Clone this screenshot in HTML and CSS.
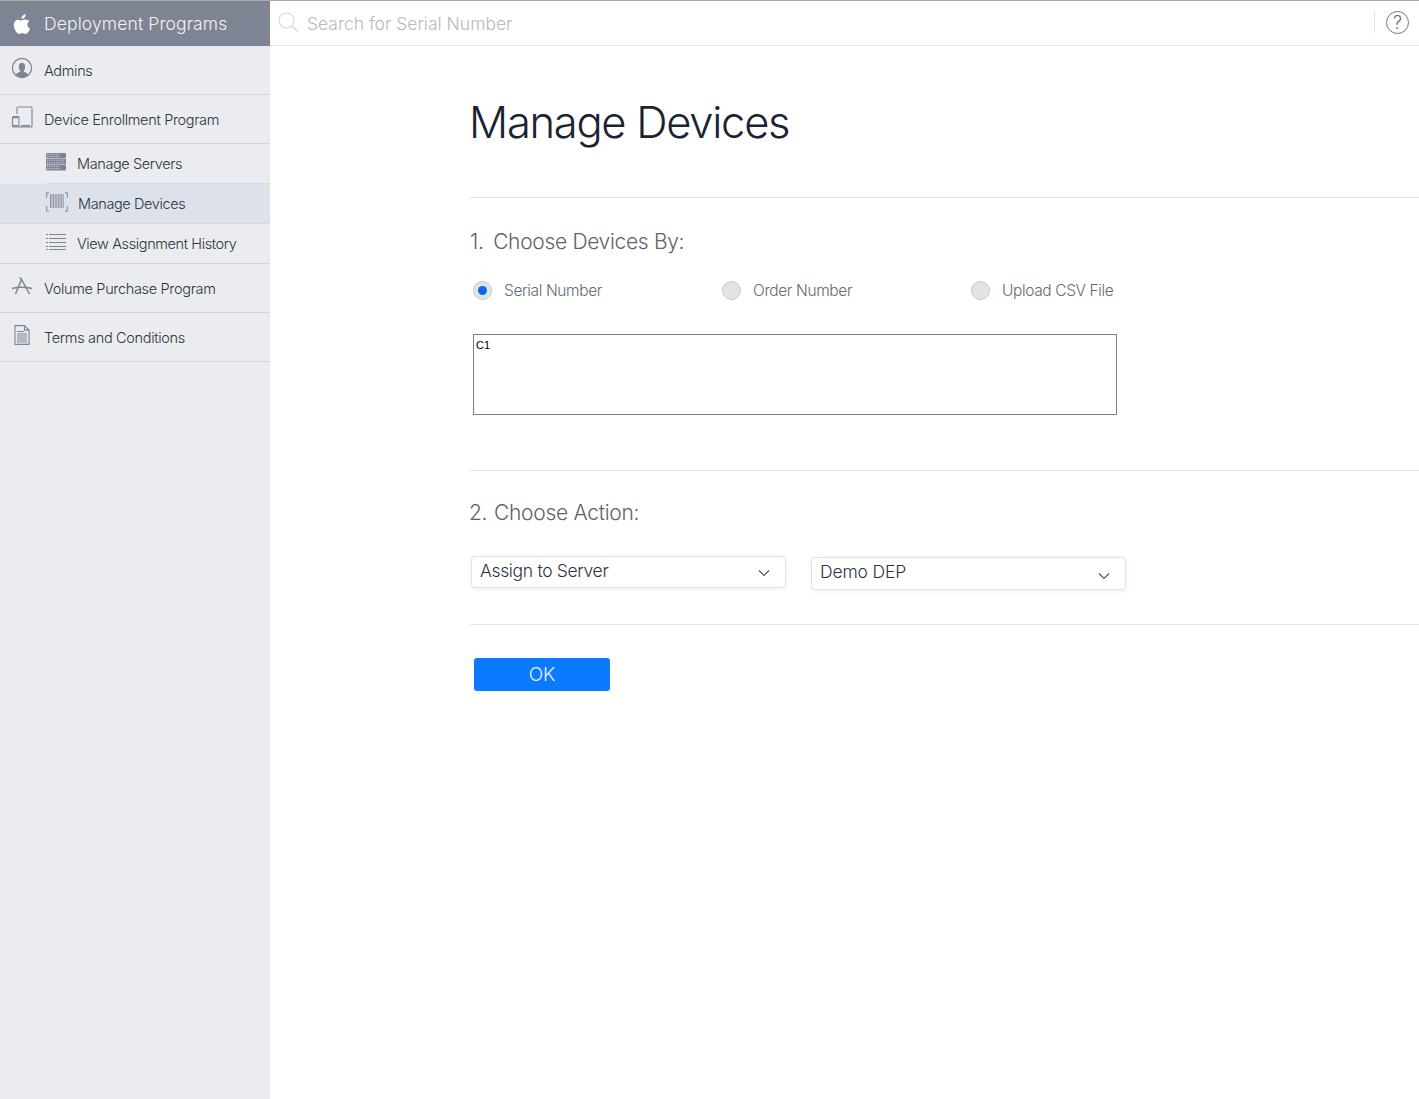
FILE: index.html
```html
<!DOCTYPE html>
<html lang="en">
<head>
<meta charset="utf-8">
<title>Manage Devices</title>
<link rel="stylesheet" href="styles.css">
</head>
<body>
<div class="app">
  <aside class="sidebar">
    <div class="brand">
      <svg class="brand-logo" width="20" height="24" viewBox="0 0 20 24"><path fill="#fff" d="M13.6 2.2c.1 1.3-.4 2.400-1.100 3.200-.8.900-1.900 1.500-3 1.400-.1-1.200.4-2.400 1.100-3.100.8-.9 2-1.500 3-1.500zM17.400 9.200c-1.300.9-2 2-2 3.500 0 1.800 1 3 2.700 3.800-.4 1.200-1 2.300-1.700 3.300-1 1.400-1.800 2.200-3 2.200-1.200 0-1.700-.7-3.200-.7-1.500 0-2 .7-3.200.7-1.100 0-2-.9-3-2.400C2.700 17.700 1.800 15.300 1.800 13c0-3.400 2.200-5.300 4.500-5.300 1.300 0 2.300.8 3.100.8.800 0 2-.9 3.500-.9 1.900 0 3.400.8 4.500 1.600z"/></svg>
      <span>Deployment Programs</span>
    </div>
    <nav>
      <a class="item">
        <svg class="ico" width="22" height="22" viewBox="0 0 22 22"><circle cx="11" cy="11" r="9.600" fill="#eaecf0" stroke="#7f8494" stroke-width="1.200"/><path fill="#7f8494" d="M4.800 18.200c1-2.700 3.900-2.600 4.500-4.100-2.300-2.900-2-8.300 1.700-8.300s4 5.400 1.700 8.300c.6 1.500 3.500 1.400 4.500 4.100-1.700 1.500-3.900 2.400-6.200 2.400s-4.500-.9-6.200-2.400z"/></svg>
        <span>Admins</span>
      </a>
      <a class="item">
        <svg class="ico" width="22" height="22" viewBox="0 0 22 22"><path fill="none" stroke="#7f8494" stroke-width="1.100" d="M6 8V2a1 1 0 0 1 1-1h13a1 1 0 0 1 1 1v18a1 1 0 0 1-1 1H8"/><rect x="1.500" y="10.500" width="6.500" height="10.500" rx="1" fill="#eaecf0" stroke="#7f8494" stroke-width="1.100"/><path stroke="#7f8494" stroke-width="1.600" d="M2 11.500h5.500M2 19.800h5.500M10 19.800h9"/></svg>
        <span>Device Enrollment Program</span>
      </a>
      <a class="sub">
        <svg class="sub-ico" width="20" height="18" viewBox="0 0 20 18"><g fill="#7f8494"><rect width="20" height="5.500" y="0" rx="1"/><rect width="20" height="5.500" y="6" rx="0"/><rect width="20" height="5.500" y="12" rx="1"/></g><path stroke="#eaecf0" stroke-width=".7" stroke-dasharray="1 .8" d="M1 1.400h13M1 3.600h13M1 7.300h18M1 9.800h18M1 13.400h13M1 15.600h13"/></svg>
        <span>Manage Servers</span>
      </a>
      <a class="sub sub-active">
        <svg class="sub-ico" width="22" height="20" viewBox="0 0 22 20"><path fill="none" stroke="#7f8494" d="M3 .7H.7v5M19 .7h2.300v5M.7 14v5.300H3M21.300 14v5.300H19"/><path stroke="#7f8494" stroke-width=".8" d="M4.500 2v14M6 2v14M7.600 2v14M9.200 2v14M10.800 2v14M12.400 2v14M14 2v14M15.600 2v14M17.200 2v14"/></svg>
        <span>Manage Devices</span>
      </a>
      <a class="sub sub-last">
        <svg class="sub-ico" width="20" height="18" viewBox="0 0 20 18"><path stroke="#7f8494" d="M3 1.500h17M3 5.500h17M3 9.500h17M3 13.500h17M3 16.500h17M0 1.500h2M0 5.500h2M0 9.500h2M0 13.500h2M0 16.500h2"/></svg>
        <span>View Assignment History</span>
      </a>
      <a class="item">
        <svg class="ico" width="22" height="20" viewBox="0 0 22 20"><path fill="none" stroke="#7f8494" stroke-width="1.500" d="M4.500 18 10.500 3.500 18.500 18M8.500 1.500l2 2M1 12.500c6-1.500 14-1.500 20 0"/></svg>
        <span>Volume Purchase Program</span>
      </a>
      <a class="item">
        <svg class="ico ico-doc" width="16" height="20" viewBox="0 0 16 20"><path fill="none" stroke="#7f8494" stroke-width="1.100" d="M1 .6h9.500L15 5.100V19.400H1zM10.500.6v4.500H15"/><path stroke="#7f8494" d="M3 6.500h7M3 9h10M3 11h10M3 13h10M3 15h10M3 17h10"/></svg>
        <span>Terms and Conditions</span>
      </a>
    </nav>
  </aside>
  <div class="main">
    <header class="topbar">
      <svg class="search-ico" width="21" height="21" viewBox="0 0 21 21"><circle cx="8.500" cy="8.500" r="7.500" fill="none" stroke="#d8d8d8" stroke-width="1.100"/><path stroke="#d8d8d8" stroke-width="1.400" d="m14 14 5.500 5.500"/></svg>
      <span class="search-text">Search for Serial Number</span>
      <div class="help-wrap"><span class="help">?</span></div>
    </header>
    <main class="content">
      <h1>Manage Devices</h1>
      <section class="step step-one">
        <h2><span class="num">1.</span> Choose Devices By:</h2>
        <div class="radios">
          <label class="radio"><span class="dot dot-on"></span><span>Serial Number</span></label>
          <label class="radio"><span class="dot"></span><span>Order Number</span></label>
          <label class="radio"><span class="dot"></span><span>Upload CSV File</span></label>
        </div>
        <div class="textarea">C1</div>
      </section>
      <section class="step step-two">
        <h2><span class="num">2.</span> Choose Action:</h2>
        <div class="selects">
          <div class="select select-a"><span>Assign to Server</span><svg width="12" height="8" viewBox="0 0 12 8"><path fill="none" stroke="#555" stroke-width="1.200" d="m1 1.500 5 5 5-5"/></svg></div>
          <div class="select select-b"><span>Demo DEP</span><svg width="12" height="8" viewBox="0 0 12 8"><path fill="none" stroke="#555" stroke-width="1.200" d="m1 1.500 5 5 5-5"/></svg></div>
        </div>
      </section>
      <section class="step-three">
        <button class="ok" type="button">OK</button>
      </section>
    </main>
  </div>
</div>
</body>
</html>
```

FILE: styles.css
```css
* { box-sizing: border-box; }
html, body { margin: 0; height: 100%; }
body { font-family: "Inter", "Liberation Sans", sans-serif; font-weight: 300; color: #2b3442; background: #fff; overflow: hidden; }
.app { display: flex; height: 1099px; }

.sidebar { width: 270px; flex: none; background: #eaecf0; }
.brand { height: 46px; background: #7f8494; border-top: 1px solid #a9a9a9; display: flex; align-items: center; padding-left: 12px; gap: 12px; color: #f2f3f5; font-size: 17.500px; letter-spacing: .12px; }
.brand-logo { flex: none; }

.item { height: 49px; display: flex; align-items: center; padding-left: 11px; border-bottom: 1px solid #cfd5de; font-size: 14.500px; letter-spacing: -.33px; color: #2b3442; }
.item span { margin-left: 11px; }
.ico { flex: none; margin-top: -5px; }
.ico-doc { margin-left: 3px; margin-right: 3px; }
.sub { height: 40px; margin-left: 46px; display: flex; align-items: center; border-bottom: 1px solid #d4d8df; font-size: 14.500px; letter-spacing: -.39px; position: relative; }
.sub span { margin-left: 11px; }
.sub-ico { flex: none; margin-top: -4px; }
.sub-active { margin-left: 0; padding-left: 46px; background: #dde2ea; }
.sub-active span { margin-left: 10px; }
.sub-last { margin-left: 0; padding-left: 46px; border-bottom-color: #cfd5de; }

.main { flex: 1; min-width: 0; display: flex; flex-direction: column; }
.topbar { height: 46px; border-top: 1px solid #a9a9a9; border-bottom: 1px solid #e6e6e6; display: flex; align-items: center; padding-left: 8px; }
.search-ico { flex: none; margin-top: -1px; }
.search-text { margin-left: 8px; font-size: 17.500px; letter-spacing: 0; color: #b9b9b9; }
.help-wrap { margin-left: auto; height: 22px; margin-top: -2px; border-left: 1px solid #e4e4e4; padding-left: 11px; padding-right: 10px; display: flex; align-items: center; }
.help { width: 23px; height: 23px; border: 1px solid #777; border-radius: 50%; display: flex; align-items: center; justify-content: center; font-size: 18px; color: #666; }

.content { flex: 1; padding-left: 200px; }
h1 { margin: 0; height: 152px; padding-top: 49px; font-size: 43.500px; line-height: 54px; font-weight: 300; letter-spacing: -1.280px; text-indent: -1px; color: #1b2333; border-bottom: 1px solid #e3e3e3; }
h2 { margin: 0; font-size: 21px; line-height: 28px; font-weight: 300; letter-spacing: -.32px; color: #5d626b; }
.num { margin-right: 4px; }
.step { border-bottom: 1px solid #e3e3e3; }
.step-one { height: 273px; padding-top: 30px; }
.radios { display: flex; margin-top: 20px; padding-left: 3px; }
.radio { width: 249px; display: flex; align-items: center; gap: 12px; height: 28px; font-size: 15.500px; letter-spacing: -.38px; color: #666b73; }
.dot { width: 19px; height: 19px; border-radius: 50%; background: #e3e3e3; border: 1px solid #c8c8c8; display: flex; align-items: center; justify-content: center; }
.dot-on::after { content: ""; width: 9px; height: 9px; border-radius: 50%; background: #0a67e8; }
.textarea { width: 644px; height: 81px; margin: 30px 0 0 3px; border: 1px solid #808080; padding: 3px 2px; font-family: "Liberation Sans", sans-serif; font-size: 11px; line-height: 15px; font-weight: 400; color: #000; }
.step-two { height: 154px; padding-top: 28px; }
.step-two h2 { margin-left: -1px; letter-spacing: -.27px; }
.step-two .num { margin-right: 1px; }
.selects { display: flex; gap: 25px; margin-top: 29px; padding-left: 1px; align-items: flex-start; }
.select { width: 315px; border: 1px solid #e2e2e2; border-radius: 4px; background: #fff; box-shadow: 0 1px 5px rgba(0,0,0,.07); display: flex; align-items: center; justify-content: space-between; padding: 0 15px 0 8px; font-size: 17.500px; letter-spacing: -.33px; color: #2b3442; }
.select-a { height: 32px; }
.select-b { height: 33px; margin-top: 1px; }
.select-b { letter-spacing: -.15px; }
.select-b svg { margin-top: 5px; }
.select-a svg { margin-top: 2px; }
.select span { margin-top: -4px; }
.step-three { padding: 33px 0 0 4px; }
.ok { display: block; width: 136px; height: 33px; border: 0; border-radius: 3px; background: #0a7aff; color: #eaf3ff; font-family: inherit; font-weight: 300; font-size: 19px; }
```
